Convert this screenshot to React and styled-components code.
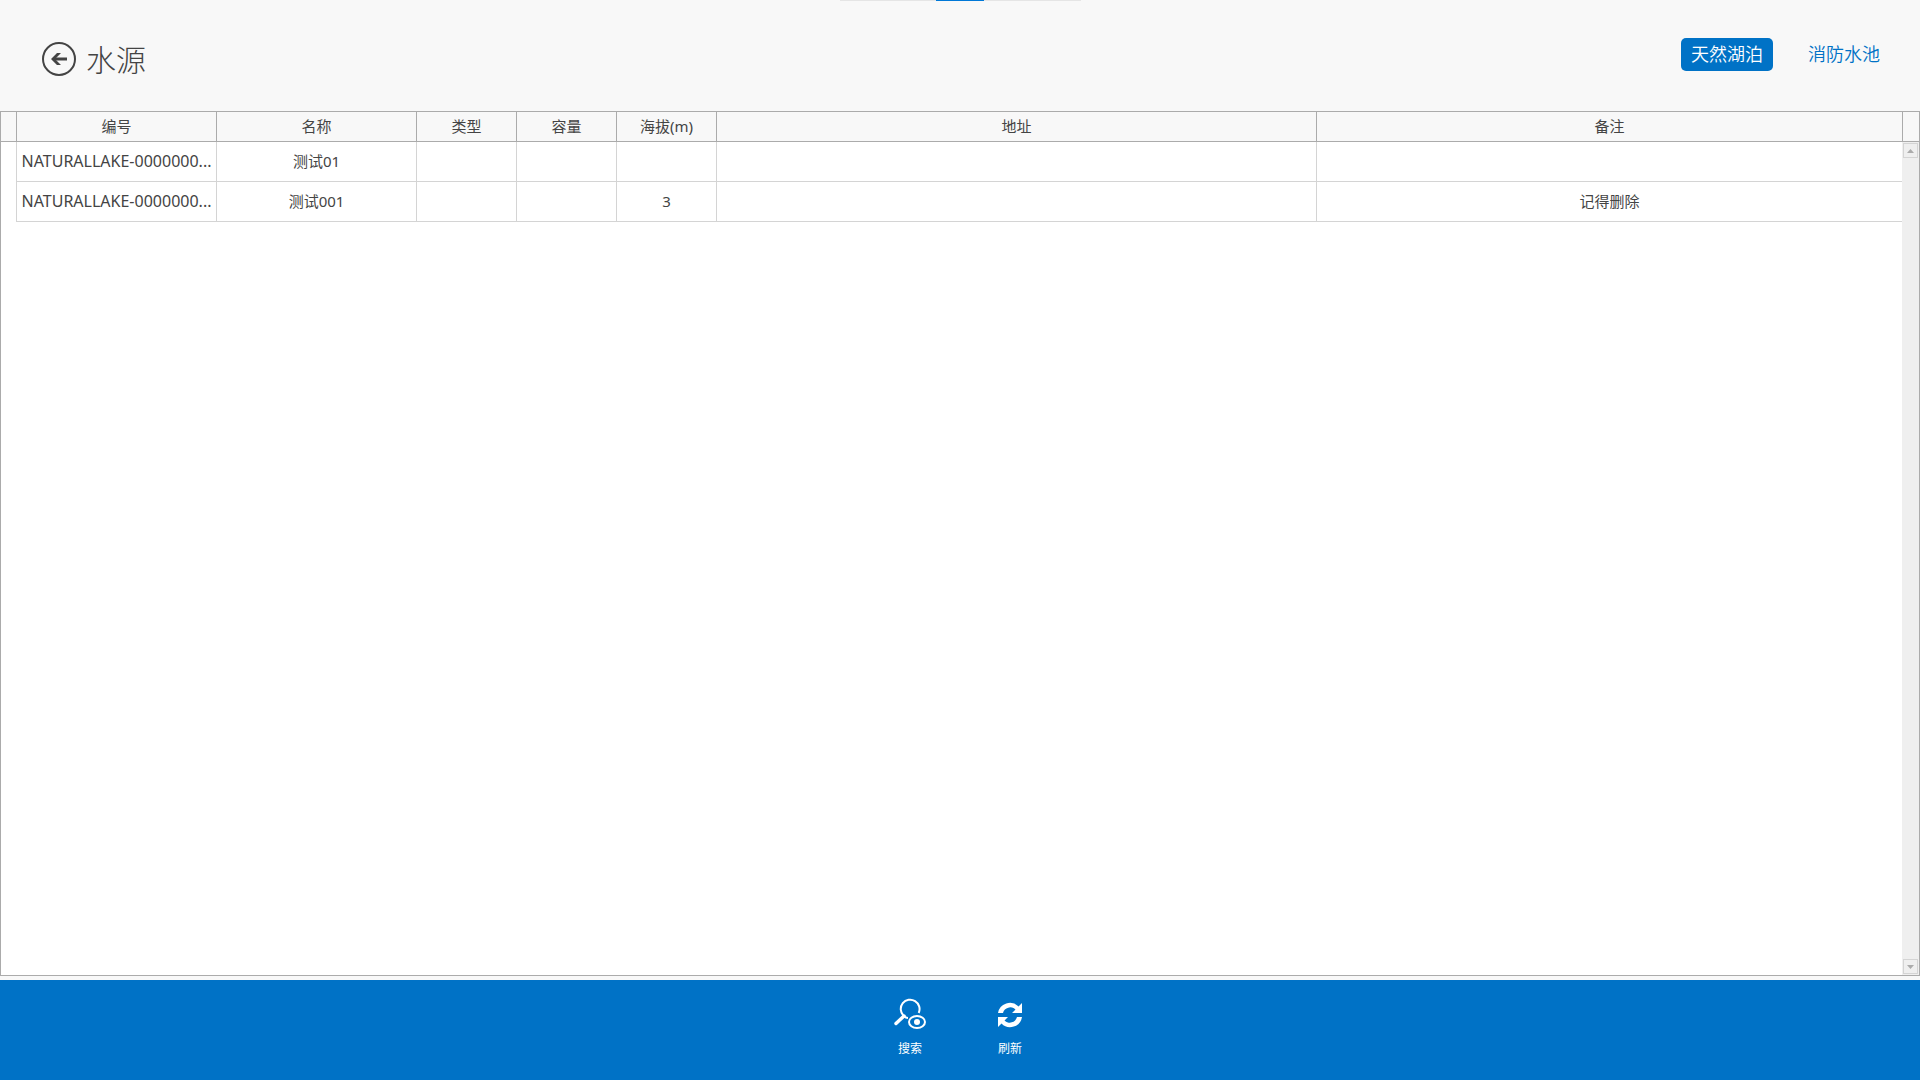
import styled, { createGlobalStyle } from "styled-components";

const GlobalStyle = createGlobalStyle`
    *, *::before, *::after {
        box-sizing: border-box;
    }
    body {
        margin: 0;
        background-color: #f8f8f8;
        color: #444444;
        font-family: "Noto Sans", "Noto Sans CJK SC", sans-serif;
        font-size: 15px;
    }
    button {
        padding: 0;
        border: none;
        background: none;
        color: inherit;
        font: inherit;
        cursor: pointer;
    }
`;

const Page = styled.div`
    display: flex;
    flex-direction: column;
    min-height: 100vh;
`;

const PullBar = styled.div`
    display: flex;
    justify-content: center;
    align-self: center;
    width: 241px;
    height: 1px;
    background-color: #e5e5e5;
`;

const PullHandle = styled.div`
    width: 48px;
    background-color: #0078d7;
`;

const Header = styled.header`
    display: flex;
    justify-content: space-between;
    height: 110px;
    padding: 37px 30px 0 42px;
`;

const TitleGroup = styled.div`
    display: flex;
    align-items: center;
    gap: 10px;
    height: 42px;
`;

const BackButton = styled.button`
    display: flex;
`;

const Title = styled.h1`
    margin: 0;
    padding-bottom: 2px;
    font-family: "Noto Sans CJK SC", sans-serif;
    font-size: 30px;
    font-weight: 300;
    line-height: 40px;
`;

const Tabs = styled.nav`
    display: flex;
    align-items: flex-start;
    gap: 25px;
`;

const Tab = styled.button`
    height: 33px;
    border-radius: 5px;
    background-color: ${({ $active }) => ($active ? "#0072c6" : "transparent")};
    color: ${({ $active }) => ($active ? "#ffffff" : "#0072c6")};
    && {
        padding: 0 10px 3px;
        font-family: "Noto Sans CJK SC", sans-serif;
        font-size: 18px;
        font-weight: 350;
        line-height: 30px;
    }
`;

const GridFrame = styled.main`
    display: flex;
    flex: 1;
    margin-bottom: 4px;
    border: 1px solid #ababab;
    background-color: #ffffff;
`;

const TableArea = styled.div`
    flex: 1;
    min-width: 0;
`;

const Table = styled.table`
    width: 100%;
    table-layout: fixed;
    border-collapse: separate;
    border-spacing: 0;
`;

const HeadCell = styled.th`
    height: 30px;
    padding: 0 0 2px;
    border-bottom: 1px solid #ababab;
    background-color: #f8f8f8;
    font-weight: 400;
    line-height: 20px;

    & + & {
        border-left: 1px solid #ababab;
    }
`;

const Cell = styled.td`
    height: 40px;
    padding: 0 0 2px;
    border-left: 1px solid #d4d4d4;
    border-bottom: 1px solid #d4d4d4;
    font-size: ${({ $code }) => ($code ? "16px" : "15px")};
    line-height: 20px;
    text-align: center;
    white-space: nowrap;
    overflow: hidden;
`;

const RowHandle = styled.td`
    padding: 0;
`;

const Side = styled.div`
    display: flex;
    flex-direction: column;
    width: 17px;
`;

const Corner = styled.div`
    height: 30px;
    border-left: 1px solid #ababab;
    border-bottom: 1px solid #ababab;
    background-color: #f8f8f8;
`;

const ScrollTrack = styled.div`
    display: flex;
    flex: 1;
    flex-direction: column;
    justify-content: space-between;
    padding: 1px;
    background-color: #efefef;
`;

const ScrollButton = styled.button`
    display: flex;
    align-items: center;
    justify-content: center;
    width: 15px;
    height: 15px;
    && {
        border: 1px solid #d4d4d4;
    }
`;

const Toolbar = styled.footer`
    display: flex;
    justify-content: center;
    height: 100px;
    background-color: #0072c6;
`;

const ToolButton = styled.button`
    display: flex;
    flex-direction: column;
    align-items: center;
    gap: 8px;
    width: 100px;
    && {
        padding-top: 16px;
        color: #ffffff;
        font-size: 12px;
        line-height: 18px;
    }
`;

const columns = [
    { key: "code", label: "编号", width: 200 },
    { key: "name", label: "名称", width: 200 },
    { key: "type", label: "类型", width: 100 },
    { key: "capacity", label: "容量", width: 100 },
    { key: "altitude", label: "海拔(m)", width: 100 },
    { key: "address", label: "地址", width: 600 },
    { key: "remark", label: "备注" },
];

const rows = [
    { code: "NATURALLAKE-0000000...", name: "测试01" },
    { code: "NATURALLAKE-0000000...", name: "测试001", altitude: 3, remark: "记得删除" },
];

function BackIcon() {
    return (
        <svg width="34" height="34" viewBox="0 0 34 34" fill="none" stroke="#444444">
            <circle cx="17" cy="17" r="16" strokeWidth="2" />
            <path d="M25 17H11" strokeWidth="3" />
            <path d="M9 17L15 11H19L13 17L19 23H15Z" fill="#444444" stroke="none" />
        </svg>
    );
}

function SearchIcon() {
    return (
        <svg width="36" height="36" viewBox="0 0 36 36" fill="none" stroke="#ffffff" strokeWidth="2">
            <path d="M26.7 17A9.4 9.4 0 1 0 11.5 19.7Q14 22 16 22" />
            <path d="M12 20L4 27.5" strokeWidth="3.4" strokeLinecap="round" />
            <ellipse cx="25" cy="26" rx="8" ry="6" />
            <circle cx="25" cy="26" r="3" fill="#ffffff" stroke="none" />
        </svg>
    );
}

function RefreshIcon() {
    return (
        <svg width="36" height="36" viewBox="0 0 36 36" fill="#ffffff">
            <path d="M6 17A12 12 0 0 1 26.5 10.5L30 7V17H20L23.5 13.5A7.5 7.5 0 0 0 11 17Z" />
            <path d="M30 21A12 12 0 0 1 9.5 27.5L6 31V21H16L12.5 24.5A7.5 7.5 0 0 0 25 21Z" />
        </svg>
    );
}

function Arrow({ down }) {
    return (
        <svg width="7" height="4" viewBox="0 0 7 4" fill="#ababab">
            <path d={down ? "M0 0H7L3.5 4Z" : "M0 4H7L3.5 0Z"} />
        </svg>
    );
}

function WaterTable() {
    return (
        <Table>
            <colgroup>
                <col width="15" />
                {columns.map((column) => (
                    <col key={column.key} width={column.width} />
                ))}
            </colgroup>
            <thead>
                <tr>
                    <HeadCell />
                    {columns.map((column) => (
                        <HeadCell key={column.key}>{column.label}</HeadCell>
                    ))}
                </tr>
            </thead>
            <tbody>
                {rows.map((row, i) => (
                    <tr key={i}>
                        <RowHandle />
                        {columns.map(({ key }) => (
                            <Cell key={key} $code={key === "code"}>{row[key]}</Cell>
                        ))}
                    </tr>
                ))}
            </tbody>
        </Table>
    );
}

function App() {
    return (
        <Page>
            <GlobalStyle />
            <PullBar>
                <PullHandle />
            </PullBar>
            <Header>
                <TitleGroup>
                    <BackButton aria-label="返回">
                        <BackIcon />
                    </BackButton>
                    <Title>水源</Title>
                </TitleGroup>
                <Tabs>
                    <Tab $active>天然湖泊</Tab>
                    <Tab>消防水池</Tab>
                </Tabs>
            </Header>
            <GridFrame>
                <TableArea>
                    <WaterTable />
                </TableArea>
                <Side>
                    <Corner />
                    <ScrollTrack>
                        <ScrollButton aria-label="向上滚动">
                            <Arrow />
                        </ScrollButton>
                        <ScrollButton aria-label="向下滚动">
                            <Arrow down />
                        </ScrollButton>
                    </ScrollTrack>
                </Side>
            </GridFrame>
            <Toolbar>
                <ToolButton>
                    <SearchIcon />
                    搜索
                </ToolButton>
                <ToolButton>
                    <RefreshIcon />
                    刷新
                </ToolButton>
            </Toolbar>
        </Page>
    );
}

export default App;
